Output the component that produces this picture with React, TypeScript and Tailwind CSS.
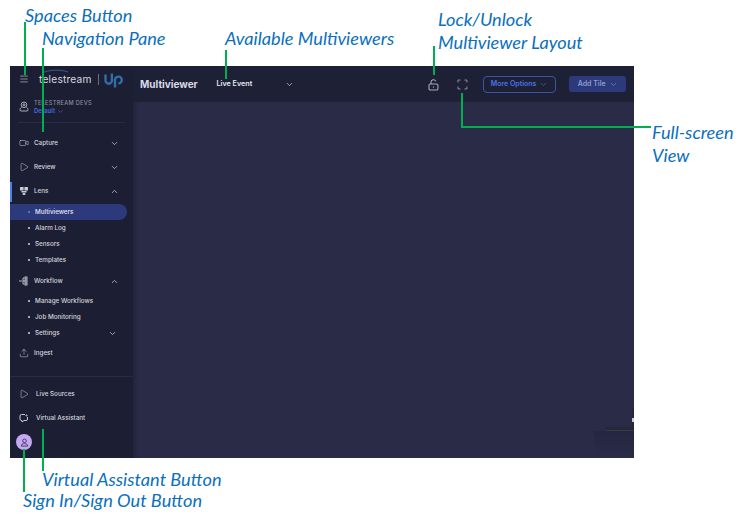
import React from "react";
import { ChevronDown, ChevronUp, Video, Play, Upload, Menu } from "lucide-react";

const Chev = ({ up = false }: { up?: boolean }) =>
  up ? <ChevronUp size={9} strokeWidth={2} className="text-[#c9cbd6]" /> : <ChevronDown size={9} strokeWidth={2} className="text-[#c9cbd6]" />;

const Row = ({ icon, label, chev, up, wide }: { icon: React.ReactNode; label: string; chev?: boolean; up?: boolean; wide?: boolean }) => (
  <div className="h-6 flex items-center pl-[9px] pr-[14px]">
    <div className="w-[10px] h-[10px] flex items-center justify-center text-[#c9cbd6]">{icon}</div>
    <span className={`${wide ? "ml-[7px]" : "ml-[5px]"} pt-px text-[6.3px] font-medium text-[#d4d5de]`}>{label}</span>
    {chev && <div className="ml-auto flex"><Chev up={up} /></div>}
  </div>
);

const Sub = ({ label, active, chev }: { label: string; active?: boolean; chev?: boolean }) => (
  <div className={`h-4 flex items-center pl-[18px] pr-[10px] w-[117px] ${active ? "bg-[#2c3a7c] rounded-r-full" : ""}`}>
    <span className={`w-[2px] h-[2px] rounded-full ${active ? "bg-[#5b82f0]" : "bg-[#d4d5de]"}`} />
    <span className={`ml-[5px] pt-px text-[6.3px] font-medium ${active ? "text-[#e4e6f2]" : "text-[#d4d5de]"}`}>{label}</span>
    {chev && <div className="ml-auto flex"><Chev /></div>}
  </div>
);

const Note = ({ x, y, children }: { x: string; y: string; children: React.ReactNode }) => (
  <div className={`absolute ${x} ${y} text-[18.2px] leading-[23px] italic text-[#0b6fbe] whitespace-nowrap`} style={{ fontFamily: "Lato, 'Open Sans', sans-serif" }}>{children}</div>
);

const Line = ({ cls }: { cls: string }) => <div className={`absolute bg-[#00b050] ${cls}`} />;

export default function App() {
  return (
    <div className="relative w-[743px] h-[518px] bg-white overflow-hidden" style={{ fontFamily: "Inter, sans-serif" }}>
      <div className="absolute left-[10px] top-[66px] w-[624px] h-[392px] flex bg-[#2a2b47] overflow-hidden">
        <aside className="w-[123px] shrink-0 flex flex-col bg-[#1c1e33] relative">
          <div className="h-[26px] flex items-center pl-[9px]">
            <Menu size={10} strokeWidth={1.5} className="text-[#c9cbd6]" />
            <div className="relative ml-[10px] w-[55px] pt-[2px] text-[10.2px] tracking-[0.2px] text-[#d8d9e0]">
              telestream
              <svg width="26" height="5" viewBox="0 0 26 5" fill="none" stroke="#3f6fb5" strokeWidth="0.8" className="absolute left-[3px] top-[-1px]">
                <path d="M0 4C6 1 18 0 26 3" />
              </svg>
            </div>
            <div className="ml-[4px] w-px h-[11px] bg-[#6a6c80]" />
            <svg width="20" height="17" viewBox="0 0 20 16" className="ml-[5px] mt-[3px]" fill="none" stroke="#2f6fa8" strokeWidth="2.4">
              <path d="M1.500 2v6a3.200 3.200 0 0 0 6.400 0V1" />
              <path d="M11 15V7.500a3.400 3.400 0 1 1 3.400 3.400" />
            </svg>
          </div>
          <div className="h-[30px] flex items-center pl-[9px]">
            <svg width="10" height="11" viewBox="0 0 10 11" fill="none" stroke="#c9cbd6" strokeWidth="0.8" className="-mt-[1px]">
              <circle cx="5" cy="3.800" r="2.800" />
              <circle cx="5" cy="3.800" r="1" />
              <path d="M2.500 6.500C.5 7.500.5 10 2 10h6c1.500 0 1.500-2.500-.5-3.500" />
            </svg>
            <div className="ml-[5px]">
              <div className="text-[5.6px] leading-[8px] tracking-[0.3px] font-medium text-[#8a8c9f]">TELESTREAM DEVS</div>
              <div className="flex items-center text-[6px] leading-[8px] font-semibold text-[#3f6ee0]">Default<ChevronDown size={7} className="ml-[2px]" /></div>
            </div>
          </div>
          <div className="h-px mx-[8px] bg-[#2a2c42]" />
          <div className="h-[8px]" />
          <Row icon={<Video size={10} strokeWidth={1.3} />} label="Capture" chev />
          <Row icon={<Play size={10} strokeWidth={1.3} />} label="Review" chev />
          <div className="relative">
            <div className="absolute left-0 top-[3px] w-[2px] h-[20px] bg-[#4a80f0]" />
            <Row icon={
              <svg width="10" height="10" viewBox="0 0 10 10" fill="#c9cbd6"><rect x="1" y="1" width="3.600" height="3.500" rx=".5" /><rect x="5.400" y="1" width="3.600" height="3.500" rx=".5" /><rect x="2.500" y="5" width="5" height="1.500" /><rect x="3.500" y="7" width="3" height="2" rx="1" /></svg>
            } label="Lens" chev up />
          </div>
          <div className="mt-[1px]" />
          <Sub label="Multiviewers" active />
          <Sub label="Alarm Log" />
          <Sub label="Sensors" />
          <Sub label="Templates" />
          <div className="mt-[1px]" />
          <Row icon={
            <svg width="10" height="10" viewBox="0 0 10 10" fill="none" stroke="#c9cbd6" strokeWidth="0.9"><path d="M0 5h3M5.500 2H4v6h1.500M4 5h2" /><rect x="6" y="1" width="2" height="2" /><rect x="6" y="4" width="2" height="2" /><rect x="6" y="7" width="2" height="2" /></svg>
          } label="Workflow" chev up />
          <Sub label="Manage Workflows" />
          <Sub label="Job Monitoring" />
          <Sub label="Settings" chev />
          <Row icon={<Upload size={10} strokeWidth={1.3} />} label="Ingest" />
          <div className="mt-auto border-t border-[#2a2c42] pt-[5px] pb-[8px]">
            <Row wide icon={<Play size={10} strokeWidth={1.3} />} label="Live Sources" />
            <Row wide icon={
              <svg width="10" height="10" viewBox="0 0 10 10" fill="none" stroke="#c9cbd6" strokeWidth="1"><path d="M6 1.500H2.500a1.500 1.500 0 0 0-1.500 1.500v3a1.500 1.500 0 0 0 1.500 1.500H3v1.500l2-1.500h2a1.500 1.500 0 0 0 1.500-1.500V4" /><circle cx="7.500" cy="2.500" r=".6" /></svg>
            } label="Virtual Assistant" />
            <div className="ml-[6px] mt-[4px] w-4 h-4 rounded-full bg-[#c4a8f0] flex items-center justify-center">
              <svg width="9" height="9" viewBox="0 0 10 10" fill="none" stroke="#3d3560" strokeWidth="1"><circle cx="5" cy="3.200" r="2" /><path d="M1.500 9c0-2 1.500-2.800 3.500-2.800S8.500 7 8.500 9z" /></svg>
            </div>
          </div>
        </aside>
        <main className="flex-1 flex flex-col min-w-0 relative">
          <div className="absolute left-0 top-[36px] bottom-0 w-[6px] bg-gradient-to-r from-[#22233c] to-transparent" />
          <header className="h-[36px] shrink-0 bg-[#1e2036] flex items-center pl-[7px] pr-[8px] relative">
            <h1 className="text-[10px] font-bold text-[#d9dbe6] w-[77px]">Multiviewer</h1>
            <span className="text-[7.2px] font-semibold text-[#e8e9f0] w-[69px]">Live Event</span>
            <ChevronDown size={9} className="text-[#c9cbd6]" />
            <svg width="11" height="12" viewBox="0 0 11 12" fill="none" stroke="#a7a9b5" strokeWidth="1.100" className="ml-[134px] mt-[1px]">
              <path d="M3 5V3.200a2.500 2.500 0 0 1 4.800-1" />
              <rect x="1" y="5" width="9" height="6" rx="1.300" />
              <path d="M5.500 7.500v1.200" />
            </svg>
            <svg width="11" height="11" viewBox="0 0 11 11" fill="none" stroke="#8f91a0" strokeWidth="1" className="ml-[18px]">
              <path d="M1 3.500V1h2.500M7.500 1H10v2.500M10 7.500V10H7.500M3.500 10H1V7.500" />
            </svg>
            <div className="ml-[15px] w-[74px] h-[17px] rounded-[4px] border border-[#38569f] flex items-center justify-center text-[7px] font-semibold text-[#4a72e6]">
              More Options<ChevronDown size={9} strokeWidth={1.6} className="ml-[3px]" />
            </div>
            <div className="ml-[13px] w-[57px] h-[16px] rounded-[3px] bg-[#2c3a7c] flex items-center justify-center text-[7px] font-semibold text-[#8c9cd0]">
              Add Tile<ChevronDown size={9} strokeWidth={1.6} className="ml-[3px]" />
            </div>
          </header>
          <div className="flex-1" />
          <div className="absolute right-0 top-[365px] bottom-0 w-[40px] bg-gradient-to-b from-[#25263f] to-transparent" />
          <div className="absolute right-0 top-[342px] w-[2px] h-[23px] bg-[#26273a]" />
          <div className="absolute right-0 top-[352px] w-[2px] h-[4px] bg-[#c9cbd6]" />
          <div className="absolute right-0 top-[361px] w-[29px] h-[4px] bg-[#26273a] rounded-bl-[3px] border-b border-[#3a3a44]" />
        </main>
      </div>

      <Note x="left-[25px]" y="top-[4px]">Spaces Button</Note>
      <Note x="left-[42px]" y="top-[27px]">Navigation Pane</Note>
      <Note x="left-[225px]" y="top-[27px]">Available Multiviewers</Note>
      <Note x="left-[438px]" y="top-[8px]">Lock/Unlock</Note>
      <Note x="left-[438px]" y="top-[31px]">Multiviewer Layout</Note>
      <Note x="left-[652px]" y="top-[121px]">Full-screen</Note>
      <Note x="left-[652px]" y="top-[144px]">View</Note>
      <Note x="left-[42px]" y="top-[468px]">Virtual Assistant Button</Note>
      <Note x="left-[23px]" y="top-[489px]">Sign In/Sign Out Button</Note>

      <Line cls="left-[24px] top-[22px] w-[2px] h-[53px]" />
      <Line cls="left-[42px] top-[48px] w-[2px] h-[84px]" />
      <Line cls="left-[225px] top-[50px] w-[2px] h-[29px]" />
      <Line cls="left-[433px] top-[46px] w-[2px] h-[29px]" />
      <Line cls="left-[461px] top-[93px] w-[2px] h-[34px]" />
      <Line cls="left-[461px] top-[126px] w-[190px] h-[2px]" />
      <Line cls="left-[42px] top-[429px] w-[2px] h-[42px]" />
      <Line cls="left-[23px] top-[449px] w-[2px] h-[43px]" />
    </div>
  );
}
